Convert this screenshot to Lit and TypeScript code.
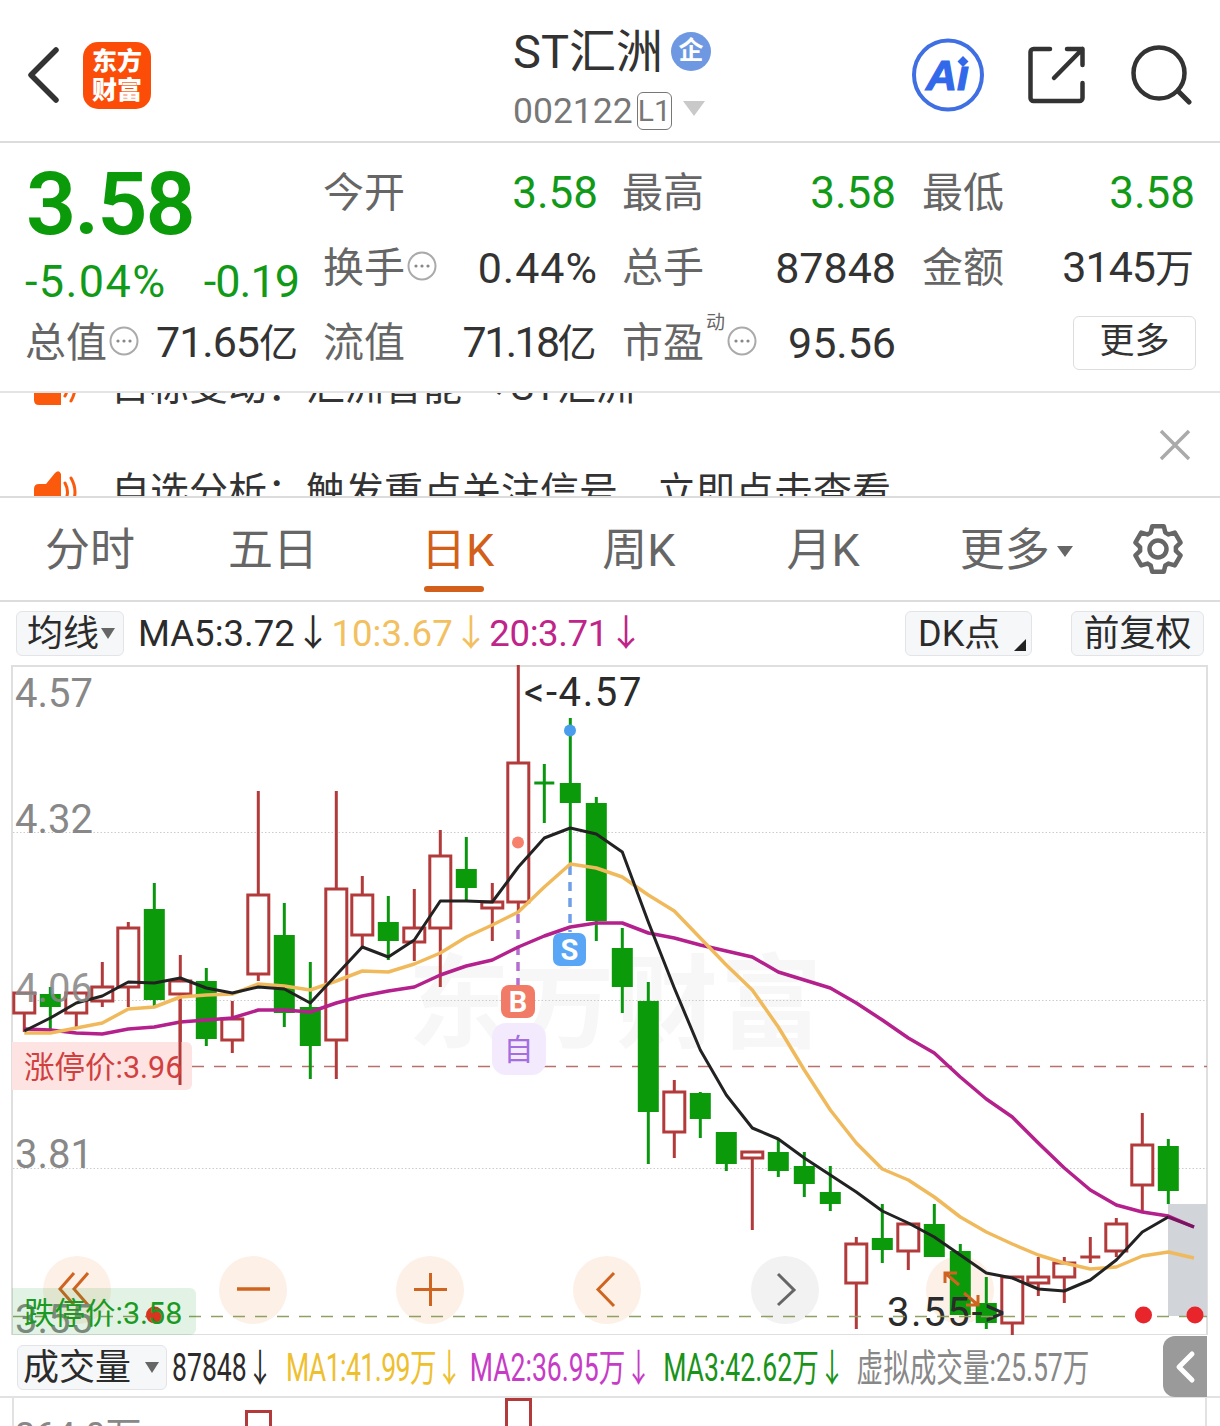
import { LitElement, html, svg, css } from "lit";
import { customElement } from "lit/decorators.js";

type Candle = [number, number, number, number, "r" | "g"];

// hi, lo, body top, body bottom, colour. x comes from the index
const CANDLES: Candle[] = [
  [993, 1032, 993, 1013, "r"], [987, 1030, 994, 1007, "g"], [993, 1027, 993, 1013, "r"], [962, 1007, 987, 1001, "r"],
  [922, 1007, 928, 987, "r"], [883, 1007, 909, 1000, "g"], [955, 1085, 981, 994, "r"], [968, 1046, 981, 1039, "g"],
  [1001, 1053, 1019, 1040, "r"], [791, 981, 895, 974, "r"], [903, 1027, 935, 1013, "g"], [962, 1079, 1007, 1046, "g"],
  [791, 1079, 889, 1040, "r"], [876, 948, 895, 935, "r"], [896, 960, 922, 941, "g"], [889, 961, 928, 942, "r"],
  [830, 987, 856, 928, "r"], [837, 902, 869, 888, "g"], [883, 941, 902, 908, "r"], [665, 913, 763, 902, "r"],
  [764, 823, 783, 783, "g"], [718, 863, 783, 803, "g"], [797, 941, 803, 921, "g"], [928, 1013, 948, 987, "g"],
  [982, 1164, 1001, 1112, "g"], [1080, 1158, 1092, 1132, "r"], [1092, 1138, 1093, 1119, "g"], [1132, 1171, 1132, 1164, "g"],
  [1152, 1230, 1152, 1158, "r"], [1140, 1177, 1152, 1171, "g"], [1152, 1197, 1166, 1184, "g"], [1166, 1211, 1192, 1204, "g"],
  [1237, 1329, 1244, 1283, "r"], [1204, 1263, 1238, 1250, "g"], [1224, 1270, 1224, 1251, "r"], [1204, 1257, 1224, 1257, "g"],
  [1244, 1315, 1251, 1315, "g"], [1277, 1329, 1303, 1323, "g"], [1277, 1335, 1277, 1323, "r"], [1257, 1296, 1277, 1283, "r"],
  [1257, 1303, 1263, 1277, "r"], [1237, 1263, 1257, 1257, "r"], [1218, 1257, 1224, 1251, "r"], [1113, 1211, 1145, 1185, "r"],
  [1139, 1204, 1146, 1191, "g"],
];

const MA5 = [1031, 1018, 1003, 996, 982, 983, 978, 988, 993, 987, 989, 1003, 975, 947, 957, 940,
  901, 901, 902, 867, 838, 828, 834, 852, 922, 988, 1050, 1095, 1128, 1139, 1158, 1175,
  1192, 1211, 1223, 1237, 1255, 1273, 1278, 1289, 1291, 1280, 1260, 1232, 1217];
const MA10 = [1033, 1033, 1028, 1023, 1009, 1007, 997, 995, 994, 984, 986, 990, 981, 971, 972, 964,
  953, 937, 925, 912, 887, 864, 868, 877, 895, 911, 938, 965, 990, 1027, 1070, 1110,
  1143, 1169, 1180, 1197, 1217, 1232, 1244, 1255, 1263, 1269, 1267, 1256, 1252];
const MA20 = [1029, 1030, 1033, 1034, 1029, 1027, 1022, 1020, 1018, 1010, 1010, 1012, 1003, 996, 991, 987,
  975, 966, 960, 947, 936, 927, 923, 923, 933, 938, 945, 951, 957, 972, 980, 988,
  1003, 1020, 1038, 1053, 1077, 1099, 1117, 1143, 1168, 1190, 1205, 1212, 1216];

const cx = (i: number) => 24.3 + 26 * i;
const points = (ys: number[]) => ys.map((y, i) => `${cx(i)},${y}`).join(" ");

const TABS = [
  { label: "分时", gap: 45 },
  { label: "五日", gap: 93 },
  { label: "日K", gap: 103, active: true },
  { label: "周K", gap: 108 },
  { label: "月K", gap: 111 },
];

const VOLUME = [
  { text: "87848↓", cls: "v-black" },
  { text: "MA1:41.99万↓", cls: "v-yellow" },
  { text: "MA2:36.95万↓", cls: "v-purple" },
  { text: "MA3:42.62万↓", cls: "v-green" },
  { text: "虚拟成交量:25.57万", cls: "v-grey" },
];

const infoIcon = html`<svg class="info" viewBox="0 0 30 30">
  <circle cx="15" cy="15" r="13.5" fill="none" stroke="#aaa" stroke-width="2"></circle>
  <circle cx="9" cy="15" r="1.6" fill="#888"></circle><circle cx="15" cy="15" r="1.6" fill="#888"></circle><circle cx="21" cy="15" r="1.6" fill="#888"></circle>
</svg>`;

const speaker = html`<svg class="speaker" viewBox="0 0 44 46">
  <path d="M0 20q0-5 5-5h7L21 4q4-4 6 1v36H5q-5 0-5-5z" fill="#fb5a0c"></path>
  <path d="M31 14q5 9 0 18M37 9q8 14 0 28" fill="none" stroke="#fb5a0c" stroke-width="3" stroke-linecap="round"></path>
</svg>`;

function gearPath(cxv: number, cyv: number) {
  const teeth = 6;
  const out = 23.5, inner = 18;
  const pts: string[] = [];
  for (let i = 0; i < teeth; i++) {
    const a = (i / teeth) * Math.PI * 2 - Math.PI / 2;
    const s = Math.PI / teeth;
    const at = (r: number, d: number) => `${(cxv + r * Math.cos(a + d)).toFixed(1)} ${(cyv + r * Math.sin(a + d)).toFixed(1)}`;
    pts.push(at(inner, -s * 0.8), at(out, -s * 0.48), at(out, s * 0.48), at(inner, s * 0.8));
  }
  return `M${pts.join("L")}Z`;
}

@customElement("kline-chart")
export class KlineChart extends LitElement {
  static styles = css`
    :host { display: block; height: 670px; }
    svg { display: block; }
    text { font-family: Roboto, "Noto Sans CJK SC", sans-serif; }
    .axis { font-size: 40px; fill: #888; }
    .axis-over { opacity: .88; }
    .note { font-size: 40px; fill: #2b2b2b; letter-spacing: 1.6px; }
    .limit { font-size: 30.5px; }
    .watermark { font-size: 102px; font-weight: 700; fill: #f7f7f7; letter-spacing: 2px; }
    .badge { font-size: 29px; font-weight: 700; fill: #fff; text-anchor: middle; }
    .self { font-size: 30px; fill: #a46ee0; text-anchor: middle; }
  `;

  candle(c: Candle, i: number) {
    const [hi, lo, top, bottom, kind] = c;
    const x = cx(i);
    const col = kind === "r" ? "#b23a3a" : "#0a960f";
    const flat = bottom - top < 1;
    return svg`<line x1=${x} x2=${x} y1=${hi} y2=${lo} stroke=${col} stroke-width="3"></line>
      ${flat
        ? svg`<line x1=${x - 10} x2=${x + 10} y1=${top} y2=${top} stroke=${col} stroke-width="3"></line>`
        : kind === "r"
          ? svg`<rect x=${x - 10.5} y=${top} width="21" height=${bottom - top} fill="#fff" stroke=${col} stroke-width="3"></rect>`
          : svg`<rect x=${x - 10.5} y=${top} width="21" height=${bottom - top} fill="#0a9a0a"></rect>`}`;
  }

  render() {
    const peach = "#fdf0e7";
    const orange = "#cf6420";
    return html`<svg width="1220" height="670" viewBox="0 665 1220 670">
      <text class="watermark" x="408" y="1040">东方财富</text>
      <path d="M12 665V1335M1207 665V1335M12 666H1207M12 1335H1207" fill="none" stroke="#dfdfdf" stroke-width="2"></path>
      <path d="M13 832.5H1207M13 1000.5H1207M13 1168.5H1207" stroke="#ccc" stroke-dasharray="1.5 2" fill="none"></path>
      <path d="M192 1066.5H1207" stroke="#b9706c" stroke-width="1.5" stroke-dasharray="12 10" fill="none"></path>

      <rect x="1168" y="1204" width="39" height="112" fill="#d1d4d9"></rect>

      <circle cx="607" cy="1290" r="34" fill=${peach}></circle>
      <circle cx="253" cy="1290" r="34" fill=${peach}></circle>
      <circle cx="430" cy="1290" r="34" fill=${peach}></circle>
      <circle cx="785" cy="1290" r="34" fill="#f2f2f2"></circle>
      <circle cx="960" cy="1290" r="34" fill=${peach}></circle>
      <circle cx="77" cy="1290" r="34" fill=${peach}></circle>

      ${CANDLES.map((c, i) => this.candle(c, i))}

      <path d="M570 866V932" stroke="#6f9fe8" stroke-width="3.5" stroke-dasharray="9 7" fill="none"></path>
      <path d="M518 914V1018" stroke="#b36fd0" stroke-width="3.5" stroke-dasharray="9 7" fill="none"></path>

      <polyline points=${points(MA20) + " 1194,1227"} fill="none" stroke="#b4208c" stroke-width="3.5" stroke-linejoin="round"></polyline>
      <polyline points=${points(MA10) + " 1194,1258"} fill="none" stroke="#f0ba5c" stroke-width="3.5" stroke-linejoin="round"></polyline>
      <polyline points=${points(MA5)} fill="none" stroke="#222" stroke-width="3" stroke-linejoin="round"></polyline>
      <polyline points="1168,1217 1194,1227" fill="none" stroke="#7a1460" stroke-width="3"></polyline>

      <text class="axis" x="15" y="707">4.57</text>
      <text class="axis" x="15" y="833">4.32</text>
      <text class="axis axis-over" x="15" y="1002">4.06</text>
      <text class="axis" x="15" y="1168">3.81</text>

      <circle cx="570" cy="730.5" r="6" fill="#4a9cec"></circle>
      <circle cx="518" cy="842.5" r="6" fill="#f6806c"></circle>
      <text class="note" x="524" y="706">&lt;-4.57</text>

      <rect x="553" y="933" width="33" height="33" rx="7" fill="#5aa6f6"></rect>
      <text class="badge" x="569.5" y="960">S</text>
      <rect x="501" y="985" width="34" height="33" rx="8" fill="#f17b66"></rect>
      <text class="badge" x="518" y="1012">B</text>
      <rect x="492" y="1023" width="54" height="52" rx="14" fill="#f3ebfd"></rect>
      <text class="self" x="518.5" y="1060">自</text>

      <path d="M12 1042H186a6 6 0 0 1 6 6V1084a6 6 0 0 1-6 6H12z" fill="#fde3e2"></path>
      <path d="M180 1000V1085" stroke="#b23a3a" stroke-width="3"></path>
      <text class="limit" x="24" y="1078" fill="#d23f3f">涨停价:3.96</text>

      <path d="M74 1273L60 1289L74 1305M88 1273L74 1289L88 1305" fill="none" stroke=${orange} stroke-width="3"></path>
      <path d="M237 1289H270" stroke=${orange} stroke-width="3.5"></path>
      <path d="M414 1289.5H447M430.5 1273V1306" stroke=${orange} stroke-width="3"></path>
      <path d="M614 1273L598 1289.5L614 1306" fill="none" stroke=${orange} stroke-width="3"></path>
      <path d="M778 1274L794 1290L778 1305" fill="none" stroke="#666" stroke-width="3"></path>
      <path d="M959 1285L945 1273M945 1283V1273H957M964 1293L978 1305M978 1295V1305H966" fill="none" stroke=${orange} stroke-width="3"></path>

      <text class="note" x="887" y="1326">3.55-&gt;</text>

      <path d="M13 1316.5H1207" stroke="#8fa060" stroke-width="1.5" stroke-dasharray="12 10" fill="none"></path>
      <circle cx="1143.5" cy="1315" r="8.5" fill="#e8252a"></circle>
      <circle cx="1195" cy="1315" r="8.5" fill="#e8252a"></circle>

      <text class="axis" x="15" y="1333">3.55</text>
      <path d="M12 1288H190a6 6 0 0 1 6 6V1329a6 6 0 0 1-6 6H12z" fill="#12a02a" fill-opacity=".12"></path>
      <circle cx="154.500" cy="1315" r="8.500" fill="#d8341f"></circle>
      <text class="limit" x="24" y="1324" fill="#1a9a22">跌停价:3.58</text>
    </svg>`;
  }
}

@customElement("app-root")
export class AppRoot extends LitElement {
  static styles = css`
    :host {
      display: block;
      width: 1220px;
      height: 1426px;
      overflow: hidden;
      background: #fff;
      color: #333;
      font-family: Roboto, "Noto Sans CJK SC", sans-serif;
    }

    /* header */
    .header { height: 141px; border-bottom: 2px solid #dcdcdc; display: flex; align-items: flex-start; }
    .back { width: 36px; height: 58px; margin: 46px 0 0 25px; }
    .logo {
      width: 68px; height: 67px; margin: 42px 0 0 22px; border-radius: 15px; background: #fb4d07; color: #fff;
      display: flex; flex-direction: column; align-items: center; justify-content: center;
      font-size: 25px; line-height: 29px; font-weight: 900;
    }
    .title { margin: 24px 0 0 362px; width: 400px; }
    .name { display: flex; align-items: center; font-size: 47px; line-height: 56px; color: #333; height: 56px; }
    .corp {
      width: 40px; height: 39px; border-radius: 50%; margin: -2px 0 0 8px; background: #6e99e2; color: #fff;
      font-size: 25px; line-height: 38px; text-align: center; font-weight: 700;
    }
    .code { display: flex; align-items: center; font-size: 35.5px; line-height: 46px; color: #777; margin-top: 8px; }
    .lv {
      width: 35px; height: 38px; box-sizing: border-box; border: 1.5px solid #777; border-radius: 6px; margin-left: 4px;
      font-size: 30px; line-height: 36px; text-align: center;
    }
    .drop { width: 0; height: 0; margin: 0 0 6px 11px; border: 11px solid transparent; border-top: 15px solid #c9c9c9; border-bottom: 0; }
    .tools { display: flex; flex: none; }
    .tool-ai { width: 74px; height: 74px; margin: 38px 0 0 -2px; }
    .tool-share { width: 60px; height: 60px; margin: 45px 0 0 42px; }
    .tool-search { width: 62px; height: 60px; margin: 45px 0 0 44px; }

    /* quote */
    .quote {
      height: 250px; box-sizing: border-box; padding: 12px 0 0 25px; border-bottom: 2px solid #e4e4e4;
      display: grid; grid-template-columns: 273px 272px 271px 272px; grid-auto-rows: 75px; column-gap: 27px;
    }
    .cell { display: flex; align-items: center; justify-content: space-between; white-space: nowrap; }
    .lab { display: flex; align-items: center; font-size: 41px; line-height: 50px; color: #666; }
    .lab.pull { margin-left: -2px; }
    .val { font-size: 43px; line-height: 50px; color: #333; margin-right: -1px; }
    .val.down { color: #119a17; font-size: 44px; }
    .val.wide { letter-spacing: 1px; }
    .val.tight { letter-spacing: -1px; margin-right: 1px; }
    .val.tighter { letter-spacing: -2.6px; margin-right: 3px; }
    .val em { font-style: normal; font-size: 39px; }
    .info { width: 30px; height: 30px; margin: -4px 0 0 2px; }
    .price { font-size: 88px; font-weight: 600; color: #0a9a0a; line-height: 88px; margin: 22px 0 0 1px; letter-spacing: -2px; }
    .chg { padding-top: 28px; }
    .chg span { font-size: 45px; line-height: 50px; color: #119a17; letter-spacing: 1.4px; }
    .chg span + span { letter-spacing: -1px; margin-right: -1px; }
    .sup { font-size: 19px; line-height: 20px; color: #666; margin: -40px 0 0 2px; width: 19px; }
    .more-btn {
      width: 123px; height: 54px; box-sizing: border-box; margin-left: auto; margin-right: -2px;
      border: 1.5px solid #ddd; border-radius: 6px; text-align: center; font-size: 35px; line-height: 50px; color: #333;
    }

    /* ticker */
    .ticker { position: relative; height: 103px; overflow: hidden; border-bottom: 2px solid #dcdcdc; }
    .ticker-list { margin-top: -59px; }
    .ticker-row { height: 105px; display: flex; align-items: center; padding-left: 34px; font-size: 39px; line-height: 50px; color: #333; white-space: nowrap; }
    .ticker-row span { margin-left: 33px; }
    .speaker { width: 44px; height: 46px; }
    .close { position: absolute; left: 1158px; top: 35px; width: 34px; height: 34px; }

    /* tabs */
    .tabs { height: 102px; border-bottom: 2px solid #dcdcdc; display: flex; align-items: center; font-size: 45px; color: #666; }
    .tab { white-space: nowrap; line-height: 60px; margin-top: 4px; }
    .tab.on { color: #d2601a; position: relative; }
    .tab.on::after {
      content: ""; position: absolute; left: 3px; width: 60px; top: 65px; height: 6px; border-radius: 3px; background: #d2601a;
    }
    .tab-more { display: flex; align-items: center; margin-left: 100px; }
    .tab-more i { width: 0; height: 0; margin-left: 7px; border: 8px solid transparent; border-top: 11px solid #666; border-bottom: 0; }
    .gear { width: 54px; height: 56px; margin-left: 58px; }

    /* indicator bar */
    .ma { height: 63px; display: flex; align-items: center; white-space: nowrap; font-size: 36.6px; line-height: 46px; }
    .chip {
      box-sizing: border-box; height: 45px; background: #f6f7f9; border: 1.5px solid #e2e4e8; border-radius: 6px; flex: none;
      display: flex; align-items: center; color: #2b2b2b; font-size: 36px; line-height: 42px; position: relative;
    }
    .chip-ma { width: 108px; margin-left: 16px; padding-left: 10px; }
    .chip-ma i { width: 0; height: 0; margin-left: 2px; border: 7px solid transparent; border-top: 11px solid #666; border-bottom: 0; }
    .ma-txt { margin-left: 14px; color: #2b2b2b; }
    .ma-10 { color: #f2c060; }
    .ma-20 { color: #bf2589; letter-spacing: -.4px; }
    .chip-dk { width: 127px; margin-left: auto; padding-left: 12px; }
    .chip-dk::after {
      content: ""; position: absolute; right: 5px; bottom: 4px; width: 0; height: 0;
      border-left: 12px solid transparent; border-bottom: 12px solid #222;
    }
    .chip-fq { width: 133px; margin: 0 16px 0 39px; justify-content: center; }

    /* volume bar */
    .vol { height: 63px; box-sizing: border-box; padding-top: 4px; display: flex; align-items: center; position: relative; white-space: nowrap; border-bottom: 2px solid #e2e2e2; }
    .chip-vol { width: 150px; margin-left: 17px; padding-left: 5px; }
    .chip-vol i { width: 0; height: 0; margin-left: 14px; border: 7px solid transparent; border-top: 11px solid #666; border-bottom: 0; }
    .vol-list { margin-left: 5px; display: flex; flex: none; transform: scaleX(.7); transform-origin: left center; font-size: 38px; line-height: 46px; }
    .vol-list span { margin-right: 16px; }
    .vol-list .v-black { margin-right: 18px; }
    .vol-list .v-yellow { margin-right: 11px; letter-spacing: -.8px; }
    .v-black { color: #2b2b2b; }
    .v-yellow { color: #eec030; }
    .v-purple { color: #c63cc6; }
    .v-green { color: #1a931a; }
    .v-grey { color: #888; }
    .collapse { position: absolute; left: 1163px; top: 1px; width: 44px; height: 61px; background: #9a9a9a; border-radius: 12px 0 0 12px; }

    .bottom { position: relative; height: 28px; overflow: hidden; border-left: 2px solid #e2e2e2; border-right: 2px solid #e2e2e2; margin: 0 12px; width: 1195px; box-sizing: border-box; }
    .bottom-label { position: absolute; left: 1px; top: 16px; font-size: 36px; line-height: 44px; color: #888; }
    .bar { position: absolute; box-sizing: border-box; width: 27px; height: 60px; background: #fff; border: 3px solid #b23a3a; }
    .bar-a { left: 231px; top: 12px; }
    .bar-b { left: 491px; top: 0; }
  `;

  render() {
    return html`
      <div class="header">
        <svg class="back" viewBox="0 0 36 58"><path d="M31 4L6 29L31 54" fill="none" stroke="#333" stroke-width="5.500" stroke-linecap="round" stroke-linejoin="round"></path></svg>
        <div class="logo"><div>东方</div><div>财富</div></div>
        <div class="title">
          <div class="name">ST汇洲<div class="corp">企</div></div>
          <div class="code">002122<div class="lv">L1</div><div class="drop"></div></div>
        </div>
        <div class="tools">
          <svg class="tool-ai" viewBox="0 0 74 74">
            <ellipse cx="37" cy="37" rx="34" ry="34.500" fill="none" stroke="#3f6fe3" stroke-width="4"></ellipse>
            <text x="15" y="52" font-family="Liberation Sans" font-size="43" font-weight="700" font-style="italic" fill="#3268ea" stroke="#3268ea" stroke-width="1.2">Aı</text>
            <path d="M52 18L57.500 23.500L52 29L46.500 23.500Z" fill="#3268ea"></path>
          </svg>
          <svg class="tool-share" viewBox="0 0 60 60">
            <path d="M23 4H6.500a3 3 0 0 0-3 3V53a3 3 0 0 0 3 3H52.500a3 3 0 0 0 3-3V38M55.500 20V4H40M55.500 4L27 33" fill="none" stroke="#333" stroke-width="4.500" stroke-linecap="round" stroke-linejoin="round"></path>
          </svg>
          <svg class="tool-search" viewBox="0 0 62 60">
            <circle cx="28" cy="28" r="25.500" fill="none" stroke="#333" stroke-width="4.500"></circle>
            <path d="M47 46L58 57" stroke="#333" stroke-width="5" stroke-linecap="round"></path>
          </svg>
        </div>
      </div>

      <div class="quote">
        <div class="cell"><div class="price">3.58</div></div>
        <div class="cell"><div class="lab pull">今开</div><div class="val down">3.58</div></div>
        <div class="cell"><div class="lab pull">最高</div><div class="val down">3.58</div></div>
        <div class="cell"><div class="lab">最低</div><div class="val down">3.58</div></div>

        <div class="cell chg"><span>-5.04%</span><span>-0.19</span></div>
        <div class="cell"><div class="lab pull">换手${infoIcon}</div><div class="val wide">0.44%</div></div>
        <div class="cell"><div class="lab pull">总手</div><div class="val">87848</div></div>
        <div class="cell"><div class="lab">金额</div><div class="val tight">3145<em>万</em></div></div>

        <div class="cell"><div class="lab">总值${infoIcon}</div><div class="val tight">71.65<em>亿</em></div></div>
        <div class="cell"><div class="lab pull">流值</div><div class="val tighter">71.18<em>亿</em></div></div>
        <div class="cell"><div class="lab pull">市盈<span class="sup">动</span>${infoIcon}</div><div class="val">95.56</div></div>
        <div class="cell"><div class="more-btn">更多</div></div>
      </div>

      <div class="ticker">
        <div class="ticker-list">
          <div class="ticker-row">${speaker}<span>目标变动：汇洲智能 →ST汇洲</span></div>
          <div class="ticker-row">${speaker}<span>自选分析：触发重点关注信号，立即点击查看</span></div>
        </div>
        <svg class="close" viewBox="0 0 34 34"><path d="M3 3L31 31M31 3L3 31" stroke="#aaa" stroke-width="3.500"></path></svg>
      </div>

      <div class="tabs">
        ${TABS.map((t) => html`<div class="tab ${t.active ? "on" : ""}" style="margin-left:${t.gap}px">${t.label}</div>`)}
        <div class="tab tab-more">更多<i></i></div>
        <svg class="gear" viewBox="0 0 54 56">
          <path d=${gearPath(27, 28)} fill="none" stroke="#666" stroke-width="4.500" stroke-linejoin="round"></path>
          <circle cx="27" cy="28" r="8.500" fill="none" stroke="#666" stroke-width="4.500"></circle>
        </svg>
      </div>

      <div class="ma">
        <div class="chip chip-ma">均线<i></i></div>
        <div class="ma-txt">MA5:3.72↓</div>
        <div class="ma-10">10:3.67↓</div>
        <div class="ma-20">20:3.71↓</div>
        <div class="chip chip-dk">DK点</div>
        <div class="chip chip-fq">前复权</div>
      </div>

      <kline-chart></kline-chart>

      <div class="vol">
        <div class="chip chip-vol">成交量<i></i></div>
        <div class="vol-list">${VOLUME.map((v) => html`<span class=${v.cls}>${v.text}</span>`)}</div>
        <div class="collapse">
          <svg width="44" height="61" viewBox="0 0 44 61"><path d="M29 18L16 31L29 44" fill="none" stroke="#fff" stroke-width="5" stroke-linecap="round" stroke-linejoin="round"></path></svg>
        </div>
      </div>

      <div class="bottom">
        <div class="bottom-label">264.0万</div>
        <div class="bar bar-a"></div>
        <div class="bar bar-b"></div>
      </div>
    `;
  }
}
